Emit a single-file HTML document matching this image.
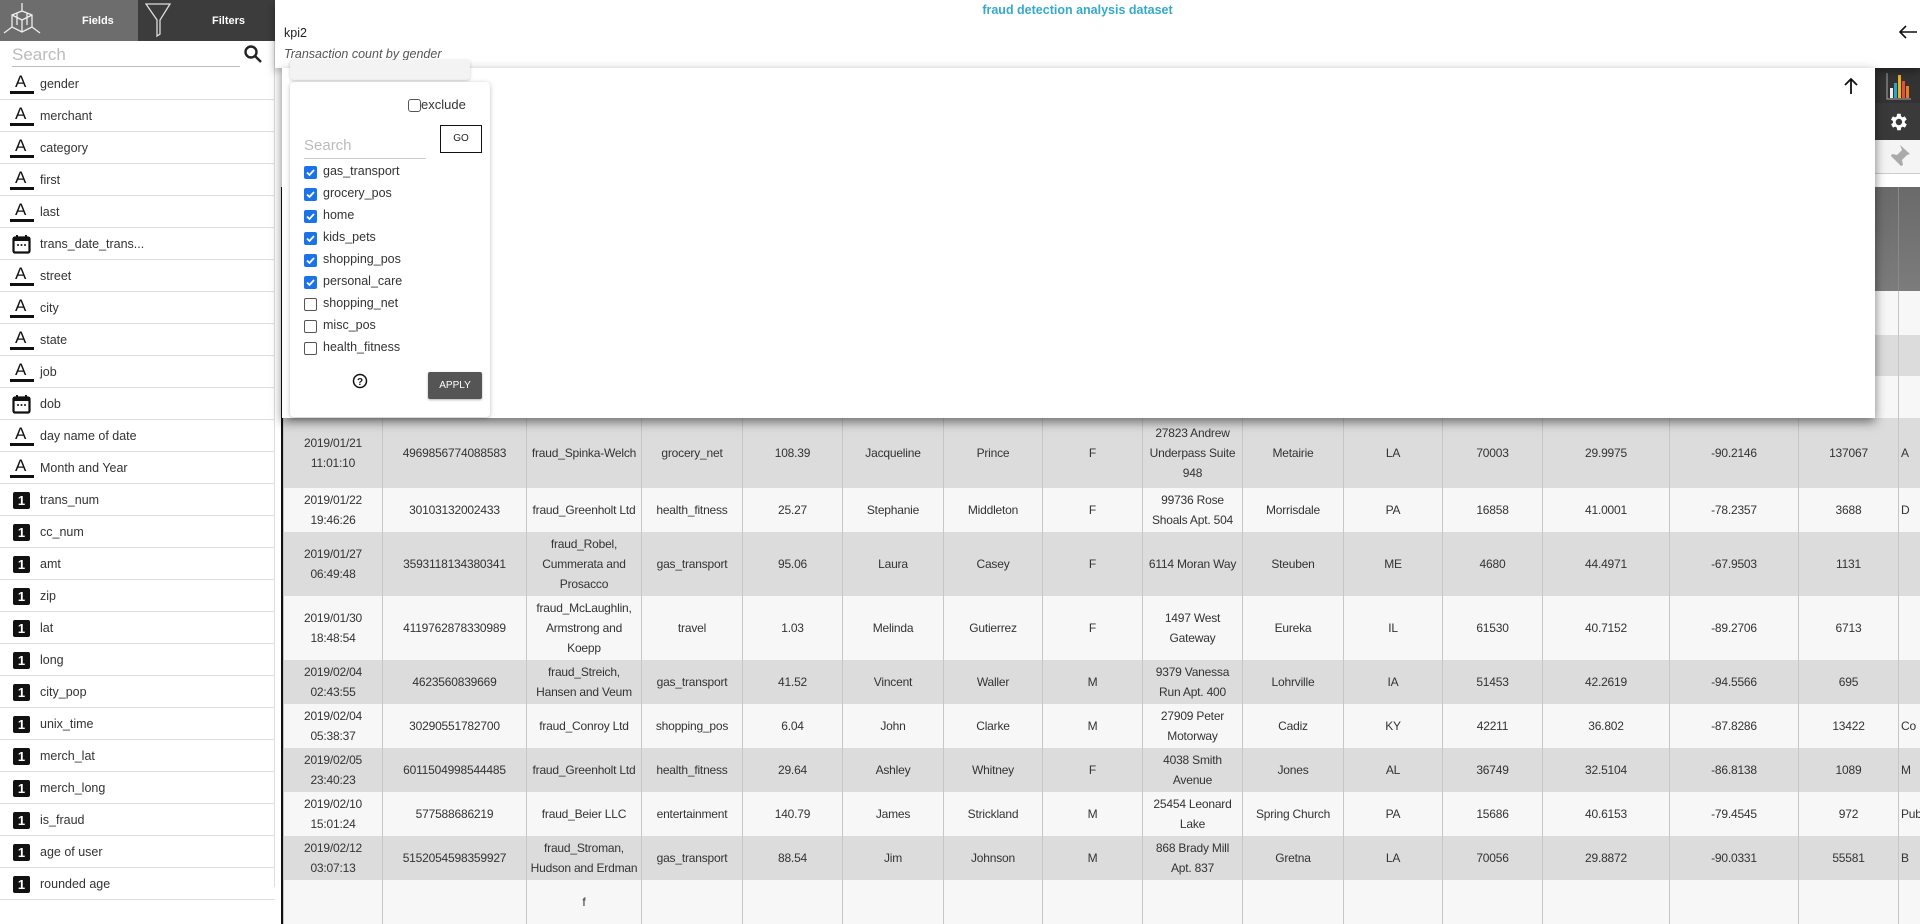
<!DOCTYPE html>
<html><head><meta charset="utf-8"><style>
*{box-sizing:border-box;margin:0;padding:0}
body{width:1920px;height:887px;overflow:hidden;background:#fff;font-family:"Liberation Sans",sans-serif;position:relative}
#side{position:absolute;left:0;top:0;width:275px;height:887px;background:#fff;border-right:1px solid #ddd}
.tab{position:absolute;top:0;height:41px;color:#fff;font-weight:bold;font-size:11px}
.srch{position:absolute;left:12px;top:44px;width:228px;height:23px;border-bottom:1px solid #bbb;color:#bbb;font-size:17px;line-height:22px}
.fl{position:absolute;left:0;width:275px;height:32px;border-bottom:1px solid #ddd;font-size:12.5px;color:#333;line-height:32px;padding-left:40px}
.ia{position:absolute;left:10px;top:6px;width:24px;height:20px}
.ia b{position:absolute;left:5px;top:-1px;font:17px/17px "Liberation Sans",sans-serif;color:#111}
.ia i{position:absolute;left:0;bottom:0;width:24px;height:3px;background:#111}
.i1{position:absolute;left:13px;top:8px;width:17px;height:17px;background:#111;border-radius:2px;color:#fff;font-size:13px;font-weight:bold;line-height:17px;text-align:center}
#hdr{position:absolute;left:275px;top:0;width:1645px;height:68px;background:#fff;box-shadow:0 4px 8px rgba(0,0,0,.35);z-index:3}
#tbl{position:absolute;left:281px;top:187px;border-left:2px solid #111;z-index:1}
table{border-collapse:collapse;table-layout:fixed;font-family:"Liberation Sans",sans-serif;font-size:12px;letter-spacing:-0.2px;color:#333}
td{border-left:1px solid #c6c6c6;text-align:center;vertical-align:middle;line-height:20px;padding:0 2px;overflow:hidden;white-space:nowrap}
tr.g{background:#dcdcdc}tr.w{background:#f7f7f7}
tr.h td{background:linear-gradient(#6a6a6a,#7c7c7c);border-left:1px solid #8a8a8a}
#modal{position:absolute;left:282px;top:68px;width:1593px;height:350px;background:#fff;box-shadow:0 4px 10px rgba(0,0,0,.5);z-index:4}
.cb{position:absolute;width:13px;height:13px;border-radius:2px}
.cb.on{background:#1a73e8}
.cb.off{border:1px solid #555;background:#fff}
.lbl{position:absolute;font-size:12.5px;color:#333}
</style></head><body>

<div id="side">
 <div class="tab" style="left:0;width:138px;background:#6d6d6d">
  <svg width="40" height="40" style="position:absolute;left:2px;top:1px" viewBox="0 0 40 40" fill="none" stroke="#eee" stroke-width="1.3">
   <path d="M20 2v8M10 14l10-4 10 4v12l-10 5-10-5z M10 14l10 5 10-5 M20 19v12 M10 26l-8 6 M30 26l8 6 M15 12v12 M25 12v12"/></svg>
  <span style="position:absolute;left:82px;top:15px">Fields</span></div>
 <div class="tab" style="left:138px;width:137px;background:#3c3c3c">
  <svg width="30" height="36" style="position:absolute;left:6px;top:2px" viewBox="0 0 30 36" fill="none" stroke="#ddd" stroke-width="1.3">
   <path d="M2 2h24L16 18v14l-3 2V18z"/></svg>
  <span style="position:absolute;left:74px;top:15px">Filters</span></div>
 <div class="srch">Search</div>
 <svg width="20" height="20" style="position:absolute;left:243px;top:44px" viewBox="0 0 20 20" fill="none" stroke="#222" stroke-width="2.4"><circle cx="8" cy="8" r="5.5"/><path d="M12 12l6 6"/></svg>
 <div id="fields"></div>
</div>

<div id="hdr">
 <div style="position:absolute;left:0;width:1645px;top:3px;text-align:center;color:#35a9cc;font-weight:bold;font-size:12.5px"><span style="position:relative;left:-20px">fraud detection analysis dataset</span></div>
 <div style="position:absolute;left:9px;top:26px;font-size:12.5px;color:#222">kpi2</div>
 <div style="position:absolute;left:9px;top:47px;font-size:12.5px;font-style:italic;color:#555">Transaction count by gender</div>
 <svg width="20" height="16" style="position:absolute;left:1623px;top:24px" viewBox="0 0 20 16" fill="none" stroke="#111" stroke-width="1.6"><path d="M19 8H2M8 2L2 8l6 6"/></svg>
</div>

<div style="position:absolute;left:1875px;top:68px;width:45px;height:35px;background:#333;z-index:2">
 <svg width="26" height="28" style="position:absolute;left:11px;top:4px" viewBox="0 0 26 28"><path d="M1 1v26h24" stroke="#aaa" fill="none"/><rect x="4" y="16" width="3" height="10" fill="#eee"/><rect x="8" y="11" width="3" height="15" fill="#2aa6c9"/><rect x="12" y="3" width="3" height="23" fill="#f2b21d"/><rect x="16" y="9" width="3" height="17" fill="#e74c3c"/><rect x="20" y="14" width="3" height="12" fill="#e67e22"/></svg></div>
<div style="position:absolute;left:1875px;top:103px;width:45px;height:37px;background:#3a3a3a;z-index:2">
 <svg width="22" height="22" style="position:absolute;left:12px;top:8px" viewBox="0 0 24 24"><path fill="#fff" d="M19.4 13a7.5 7.5 0 000-2l2.1-1.6-2-3.5-2.5 1a7.4 7.4 0 00-1.7-1L15 3h-4l-.4 2.9a7.4 7.4 0 00-1.7 1l-2.5-1-2 3.5L6.6 11a7.5 7.5 0 000 2l-2.1 1.6 2 3.5 2.5-1a7.4 7.4 0 001.7 1L11 21h4l.4-2.9a7.4 7.4 0 001.7-1l2.5 1 2-3.5zM13 15.5a3.5 3.5 0 110-7 3.5 3.5 0 010 7z"/></svg></div>
<div style="position:absolute;left:1875px;top:140px;width:45px;height:34px;background:#f4f4f4;border-bottom:1px solid #ccc;z-index:2">
 <svg width="24" height="26" style="position:absolute;left:12px;top:4px" viewBox="0 0 24 26"><path fill="#aaa" d="M13 1l10 9-3 1-5 5 1 5-2 1-5-5-7 8 7-8-5-5 1-2 5 1 5-5z"/></svg></div>

<div id="tbl"><table id="t"></table></div>

<div id="modal">
 <svg width="16" height="18" style="position:absolute;left:1561px;top:9px" viewBox="0 0 16 18" fill="none" stroke="#111" stroke-width="1.8"><path d="M8 17V2M2 8l6-6 6 6"/></svg>
 <div style="position:absolute;left:8px;top:-8px;width:180px;height:20px;background:#f3f3f3;border-radius:0 0 4px 4px;box-shadow:0 1px 3px rgba(0,0,0,.2)"></div>
 <div style="position:absolute;left:8px;top:14px;width:200px;height:335px;background:#fff;border-radius:4px;box-shadow:0 1px 5px rgba(0,0,0,.25)">
  <div class="cb off" style="left:118px;top:17px;border-radius:3px"></div>
  <div class="lbl" style="left:131px;top:15px;font-size:13px">exclude</div>
  <div style="position:absolute;left:14px;top:51px;width:122px;height:26px;border-bottom:1px solid #ccc;color:#bbb;font-size:15px;line-height:26px">Search</div>
  <div style="position:absolute;left:150px;top:43px;width:42px;height:28px;border:1px solid #111;font-size:10px;text-align:center;line-height:26px;color:#222">GO</div>
  <div id="cbs"></div>
  <svg width="16" height="16" style="position:absolute;left:62px;top:291px" viewBox="0 0 16 16"><circle cx="8" cy="8" r="6.5" fill="none" stroke="#111" stroke-width="1.5"/><text x="8" y="12" text-anchor="middle" font-size="10" font-weight="bold" font-family="Liberation Sans" fill="#111">?</text></svg>
  <div style="position:absolute;left:138px;top:290px;width:54px;height:27px;background:#555;color:#fff;font-size:10px;text-align:center;line-height:27px;border-radius:2px;box-shadow:0 1px 2px rgba(0,0,0,.3)">APPLY</div>
 </div>
</div>

<script>
var f=[["A","gender"],["A","merchant"],["A","category"],["A","first"],["A","last"],["D","trans_date_trans..."],["A","street"],["A","city"],["A","state"],["A","job"],["D","dob"],["A","day name of date"],["A","Month and Year"],["1","trans_num"],["1","cc_num"],["1","amt"],["1","zip"],["1","lat"],["1","long"],["1","city_pop"],["1","unix_time"],["1","merch_lat"],["1","merch_long"],["1","is_fraud"],["1","age of user"],["1","rounded age"]];
var h="";f.forEach(function(x,i){var ic;
if(x[0]=="A")ic='<span class="ia"><b>A</b><i></i></span>';
else if(x[0]=="D")ic='<svg style="position:absolute;left:12px;top:6px" width="19" height="20" viewBox="0 0 19 20"><rect x="1.5" y="3.5" width="16" height="15" rx="1.5" fill="none" stroke="#111" stroke-width="2.2"/><rect x="1" y="3" width="17" height="4" fill="#111"/><rect x="4" y="1" width="2" height="4" fill="#111"/><rect x="13" y="1" width="2" height="4" fill="#111"/><circle cx="6" cy="11" r="1" fill="#111"/><circle cx="9.5" cy="11" r="1" fill="#111"/><circle cx="13" cy="11" r="1" fill="#111"/></svg>';
else ic='<span class="i1">1</span>';
h+='<div class="fl" style="top:'+(68+i*32)+'px">'+ic+x[1]+'</div>';});
document.getElementById("fields").innerHTML=h;
var c=[["gas_transport",1],["grocery_pos",1],["home",1],["kids_pets",1],["shopping_pos",1],["personal_care",1],["shopping_net",0],["misc_pos",0],["health_fitness",0]];
h="";c.forEach(function(x,i){var y=84+i*22;
h+='<div class="cb '+(x[1]?'on':'off')+'" style="left:14px;top:'+y+'px">'+(x[1]?'<svg width="13" height="13" viewBox="0 0 13 13" style="position:absolute;left:0;top:0"><path d="M3 6.5l2.5 2.5 4.5-5" stroke="#fff" stroke-width="1.8" fill="none"/></svg>':'')+'</div><div class="lbl" style="left:33px;top:'+(y-2)+'px">'+x[0]+'</div>';});
document.getElementById("cbs").innerHTML=h;
var w=[99,144,115,101,100,101,99,100,100,101,99,100,127,129,100,40];
var rows=[
["h",104,[]],["w",44,[]],["g",41,[]],["w",42,[]],
["g",70,["2019/01/21<br>11:01:10","4969856774088583","fraud_Spinka-Welch","grocery_net","108.39","Jacqueline","Prince","F","27823 Andrew<br>Underpass Suite<br>948","Metairie","LA","70003","29.9975","-90.2146","137067","A"]],
["w",44,["2019/01/22<br>19:46:26","30103132002433","fraud_Greenholt Ltd","health_fitness","25.27","Stephanie","Middleton","F","99736 Rose<br>Shoals Apt. 504","Morrisdale","PA","16858","41.0001","-78.2357","3688","D"]],
["g",64,["2019/01/27<br>06:49:48","3593118134380341","fraud_Robel,<br>Cummerata and<br>Prosacco","gas_transport","95.06","Laura","Casey","F","6114 Moran Way","Steuben","ME","4680","44.4971","-67.9503","1131",""]],
["w",64,["2019/01/30<br>18:48:54","4119762878330989","fraud_McLaughlin,<br>Armstrong and<br>Koepp","travel","1.03","Melinda","Gutierrez","F","1497 West<br>Gateway","Eureka","IL","61530","40.7152","-89.2706","6713",""]],
["g",44,["2019/02/04<br>02:43:55","4623560839669","fraud_Streich,<br>Hansen and Veum","gas_transport","41.52","Vincent","Waller","M","9379 Vanessa<br>Run Apt. 400","Lohrville","IA","51453","42.2619","-94.5566","695",""]],
["w",44,["2019/02/04<br>05:38:37","30290551782700","fraud_Conroy Ltd","shopping_pos","6.04","John","Clarke","M","27909 Peter<br>Motorway","Cadiz","KY","42211","36.802","-87.8286","13422","Co"]],
["g",44,["2019/02/05<br>23:40:23","6011504998544485","fraud_Greenholt Ltd","health_fitness","29.64","Ashley","Whitney","F","4038 Smith<br>Avenue","Jones","AL","36749","32.5104","-86.8138","1089","M"]],
["w",44,["2019/02/10<br>15:01:24","577588686219","fraud_Beier LLC","entertainment","140.79","James","Strickland","M","25454 Leonard<br>Lake","Spring Church","PA","15686","40.6153","-79.4545","972","Pub"]],
["g",44,["2019/02/12<br>03:07:13","5152054598359927","fraud_Stroman,<br>Hudson and Erdman","gas_transport","88.54","Jim","Johnson","M","868 Brady Mill<br>Apt. 837","Gretna","LA","70056","29.8872","-90.0331","55581","B"]],
["w",44,["","","f","","","","","","","","","","","","",""]]];
h='<colgroup>'+w.map(function(x){return '<col style="width:'+x+'px">'}).join('')+'</colgroup>';
rows.forEach(function(r){h+='<tr class="'+r[0]+'" style="height:'+r[1]+'px">';for(var i=0;i<16;i++){var t=r[2][i]||"";h+='<td'+(i==15?' style="text-align:left;padding:0 2px"':'')+'>'+t+'</td>';}h+='</tr>';});
document.getElementById("t").innerHTML=h;
document.getElementById("t").style.width="1636px";
</script>
</body></html>
